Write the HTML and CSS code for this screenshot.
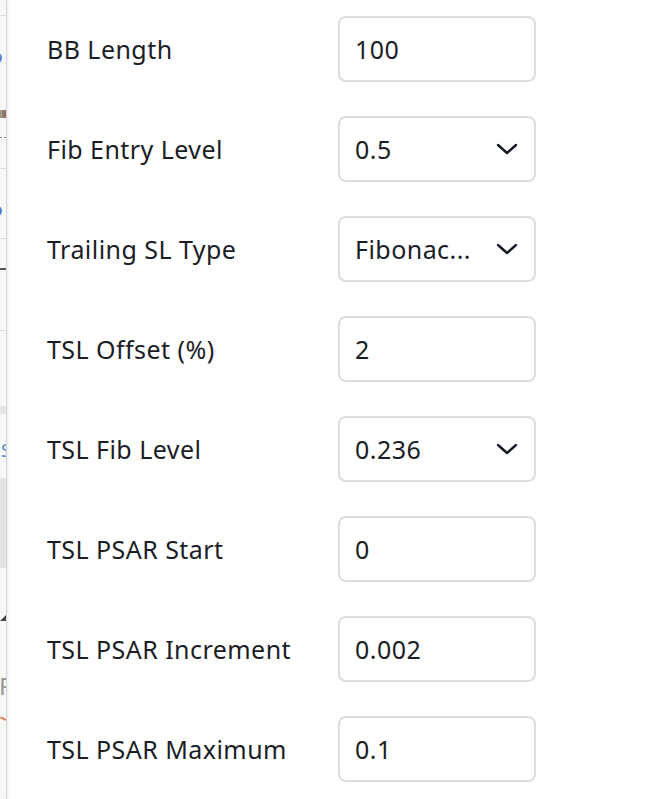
FILE: index.html
```html
<!DOCTYPE html>
<html>
<head>
<meta charset="utf-8">
<link rel="stylesheet" href="styles.css">
</head>
<body>
<div class="page">
  <div class="chart-strip">
    <span class="grid-line" style="top:15px"></span>
    <span class="circ" style="top:52px"></span>
    <span class="mark" style="top:110px"></span>
    <span class="dash" style="top:137px"></span>
    <span class="grid-line" style="top:168px"></span>
    <span class="circ" style="top:205px"></span>
    <span class="grid-line" style="top:238px"></span>
    <span class="dark-line" style="top:268px"></span>
    <span class="grid-line" style="top:330px"></span>
    <span class="band" style="top:406px;height:8px"></span>
    <span class="blue-s" style="top:440px">S</span>
    <span class="band" style="top:478px;height:90px"></span>
    <span class="tri" style="top:615px"></span>
    <span class="gray-f" style="top:672px">F</span>
    <span class="orange" style="top:718px"></span>
  </div>
  <div class="panel">
    <div class="row">
      <div class="label">BB Length</div>
      <div class="field">100</div>
    </div>
    <div class="row">
      <div class="label">Fib Entry Level</div>
      <div class="field select"><span class="val">0.5</span>
        <svg class="chev" viewBox="0 0 22 12" width="22" height="12"><path d="M2 2 L11 10 L20 2" fill="none" stroke="#131722" stroke-width="2.4" stroke-linecap="round" stroke-linejoin="round"/></svg>
      </div>
    </div>
    <div class="row">
      <div class="label">Trailing SL Type</div>
      <div class="field select"><span class="val">Fibonac...</span>
        <svg class="chev" viewBox="0 0 22 12" width="22" height="12"><path d="M2 2 L11 10 L20 2" fill="none" stroke="#131722" stroke-width="2.4" stroke-linecap="round" stroke-linejoin="round"/></svg>
      </div>
    </div>
    <div class="row">
      <div class="label">TSL Offset (%)</div>
      <div class="field">2</div>
    </div>
    <div class="row">
      <div class="label">TSL Fib Level</div>
      <div class="field select"><span class="val">0.236</span>
        <svg class="chev" viewBox="0 0 22 12" width="22" height="12"><path d="M2 2 L11 10 L20 2" fill="none" stroke="#131722" stroke-width="2.4" stroke-linecap="round" stroke-linejoin="round"/></svg>
      </div>
    </div>
    <div class="row">
      <div class="label">TSL PSAR Start</div>
      <div class="field">0</div>
    </div>
    <div class="row">
      <div class="label">TSL PSAR Increment</div>
      <div class="field">0.002</div>
    </div>
    <div class="row">
      <div class="label">TSL PSAR Maximum</div>
      <div class="field">0.1</div>
    </div>
  </div>
</div>
</body>
</html>
```
FILE: styles.css
```css
html, body {
  margin: 0;
  padding: 0;
  background: #ffffff;
}
body {
  font-family: "Noto Sans", "DejaVu Sans", sans-serif;
  color: #1a1d26;
  overflow: hidden;
}
.page {
  display: flex;
  width: 663px;
  height: 799px;
  overflow: hidden;
}
.chart-strip {
  position: relative;
  width: 6px;
  flex: none;
  background: #f7f7f5;
  overflow: hidden;
  border-right: 1px solid #d6d6d6;
  box-shadow: 1px 0 2px rgba(0,0,0,0.08);
}
.grid-line {
  position: absolute;
  left: 0;
  width: 7px;
  height: 1px;
  background: #dedede;
}
.dark-line {
  position: absolute;
  left: 0;
  width: 7px;
  height: 2px;
  background: #555;
}
.circ {
  position: absolute;
  left: -10px;
  width: 12px;
  height: 12px;
  border: 2px solid #4f7fd0;
  border-radius: 50%;
  box-sizing: border-box;
}
.mark {
  position: absolute;
  left: 0;
  width: 7px;
  height: 8px;
  background: linear-gradient(90deg, #8a6a55 0 2px, #4a5a3a 2px 4px, #7a2a2a 4px 7px);
  opacity: 0.7;
}
.dash {
  position: absolute;
  left: 0;
  width: 7px;
  height: 1px;
  background: repeating-linear-gradient(90deg, #888 0 2px, transparent 2px 4px);
}
.band {
  position: absolute;
  left: 0;
  width: 7px;
  background: #e3e3e3;
}
.blue-s {
  position: absolute;
  left: 1px;
  font-size: 18px;
  line-height: 20px;
  color: #5b8fd6;
}
.tri {
  position: absolute;
  left: 0;
  width: 0;
  height: 0;
  border-left: 6px solid transparent;
  border-bottom: 6px solid #444;
}
.gray-f {
  position: absolute;
  left: -1px;
  font-size: 24px;
  line-height: 28px;
  color: #999;
}
.orange {
  position: absolute;
  left: 0;
  width: 8px;
  height: 2px;
  background: #e08060;
  transform: rotate(25deg);
}
.panel {
  flex: 1;
  display: flex;
  flex-direction: column;
  gap: 34px;
  padding: 16px 0 0 40px;
  background: #ffffff;
}
.row {
  display: grid;
  grid-template-columns: 291px 198px;
  align-items: center;
  height: 66px;
}
.label {
  font-size: 25px;
  letter-spacing: 0.45px;
  white-space: nowrap;
}
.field {
  box-sizing: border-box;
  height: 66px;
  border: 2px solid #dcdde0;
  border-radius: 8px;
  display: flex;
  align-items: center;
  justify-content: space-between;
  padding: 0 16px 0 15px;
  font-size: 25px;
  letter-spacing: 0.45px;
}
.chev {
  display: block;
}
```
